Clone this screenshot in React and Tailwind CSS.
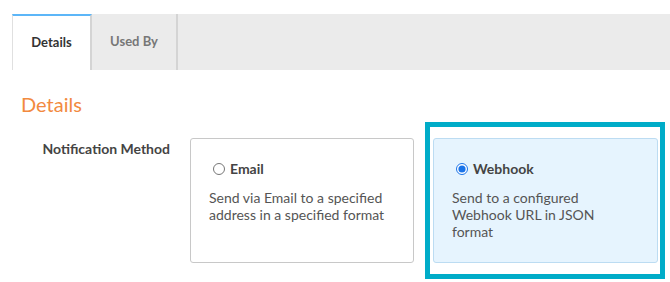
import { useState } from "react";

const methods = [
  {
    id: "email",
    label: "Email",
    text: "Send via Email to a specified address in a specified format",
  },
  {
    id: "webhook",
    label: "Webhook",
    text: "Send to a configured Webhook URL in JSON format",
  },
];

export default function App() {
  const [tab, setTab] = useState("details");
  const [method, setMethod] = useState("webhook");

  return (
    <div className="w-[670px] h-[282px] overflow-hidden bg-white font-['Lato',sans-serif] pt-[14px]">
      {/* tabs */}
      <div className="ml-[12px] flex h-[56px] bg-[#ebebeb]">
        <button
          onClick={() => setTab("details")}
          className={
            tab === "details"
              ? "w-[80px] bg-white border-t-2 border-[#5cb6f8] border-l border-l-[#e0e0e0] border-r-2 border-r-[#d4d4d4] text-[13px] font-bold text-[#333]"
              : "w-[80px] border-r-2 border-[#d4d4d4] text-[13px] font-bold text-[#777]"
          }
        >
          Details
        </button>
        <button
          onClick={() => setTab("used")}
          className="w-[86px] border-r-2 border-[#d4d4d4] text-[13px] font-bold text-[#777]"
        >
          Used By
        </button>
      </div>

      <h2 className="ml-[21px] mt-[22px] text-[20px] leading-[24px] text-[#f28a3f]">Details</h2>

      <div className="mt-[22px] flex">
        <div className="w-[170px] text-right text-[14px] leading-[20px] font-bold text-[#444] pt-[1px]">
          Notification Method
        </div>
        <div className="ml-[20px] flex gap-[19px]">
          {methods.map((m) => {
            const on = method === m.id;
            return (
              <label
                key={m.id}
                className={
                  on
                    ? "relative w-[225px] h-[125px] rounded-[3px] border border-[#bcdcf2] bg-[#e6f4fe] pl-[18px] pt-[20px] cursor-pointer"
                    : "relative w-[224px] h-[125px] rounded-[3px] border border-[#c8c8c8] bg-white pl-[18px] pt-[20px] cursor-pointer"
                }
              >
                {on && (
                  <span className="pointer-events-none absolute -left-[9px] -top-[17px] -right-[8px] -bottom-[17px] border-[5px] border-[#00acc8]" />
                )}
                <div className="flex items-center gap-[5px] pl-[4px] text-[14px] font-bold text-[#444] leading-[20px]">
                  <input
                    type="radio"
                    name="method"
                    checked={on}
                    onChange={() => setMethod(m.id)}
                    className="m-0 w-[12px] h-[12px] accent-[#1a73e8]"
                  />
                  {m.label}
                </div>
                <p className="mt-[10px] w-[180px] text-[14px] leading-[17px] text-[#555]">{m.text}</p>
              </label>
            );
          })}
        </div>
      </div>
    </div>
  );
}
